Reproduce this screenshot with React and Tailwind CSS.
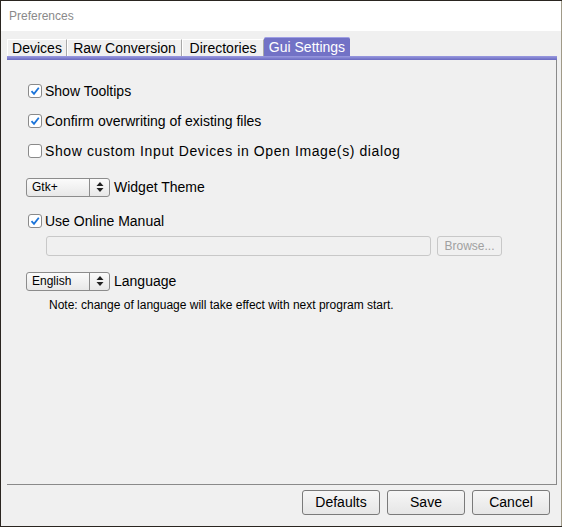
import React from "react";

const font = { fontFamily: '"Liberation Sans", Arial, sans-serif' };

function Check({ checked }) {
  return (
    <span className="w-[14px] h-[14px] border border-[#8a8a8a] rounded-[3px] bg-white flex items-center justify-center shrink-0">
      {checked && (
        <svg width="10" height="10" viewBox="0 0 10 10">
          <path d="M1.5 5.2 L4 7.8 L8.8 1.8" fill="none" stroke="#1a73d9" strokeWidth="1.8" />
        </svg>
      )}
    </span>
  );
}

function CheckRow({ checked, label, wide }) {
  return (
    <div className="flex items-center h-[18px] gap-[3px] text-[14px] text-black">
      <Check checked={checked} />
      <span className={wide ? "tracking-[0.6px]" : ""}>{label}</span>
    </div>
  );
}

function Combo({ value, label }) {
  return (
    <div className="flex items-center h-[20px] gap-[4px]">
      <div className="w-[84px] h-[19px] border border-[#8c8c8c] rounded-[3px] bg-gradient-to-b from-[#fbfbfb] to-[#e8e8e8] flex text-[12px]">
        <div className="flex-1 pl-[5px] flex items-center text-black">{value}</div>
        <div className="w-[20px] border-l border-[#8c8c8c] flex items-center justify-center">
          <svg width="8" height="12" viewBox="0 0 8 12">
            <path d="M0.5 5 L4 1 L7.5 5 Z" fill="#222" />
            <path d="M0.5 7 L4 11 L7.5 7 Z" fill="#222" />
          </svg>
        </div>
      </div>
      <span className="text-[14px] text-black">{label}</span>
    </div>
  );
}

function Btn({ children }) {
  return (
    <div className="w-[78px] h-[25px] border border-[#7a7a7a] rounded-[3px] bg-gradient-to-b from-[#f6f6f6] to-[#e6e6e6] flex items-center justify-center text-[14px] text-black">
      {children}
    </div>
  );
}

function Tab({ w, children }) {
  return (
    <div
      className={`${w} h-[17px] flex items-center justify-center border-l border-t border-white border-r-[#a8a8a8] border-r bg-[#f0f0f0] text-black`}
    >
      {children}
    </div>
  );
}

export default function App() {
  return (
    <div className="w-[562px] h-[527px] bg-[#2a2520] overflow-hidden" style={font}>
      <div className="ml-[1px] mt-[1px] w-[561px] h-[525px] bg-[#f0f0f0] border-r border-[#a09a88] flex flex-col">
        <div className="h-[30px] bg-white flex items-center pl-[8px] text-[12px] text-[#8a8a8a]">
          Preferences
        </div>
        <div className="flex-1 flex flex-col pl-[6px] pr-[4px] pt-[6px]">
          <div className="flex items-end h-[19px] text-[14px]">
            <Tab w="w-[60px]">Devices</Tab>
            <Tab w="w-[115px]">Raw Conversion</Tab>
            <Tab w="w-[82px]">Directories</Tab>
            <div className="w-[86px] h-[19px] flex items-center justify-center bg-[#7272c6] border-t border-[#a0a0e4] text-white rounded-t-[2px]">
              Gui Settings
            </div>
          </div>
          <div className="h-[4px] bg-gradient-to-b from-[#9a9ae0] to-[#6a6ac0]" />
          <div className="h-[425px] border-r border-b border-[#8a8a8a] bg-[#f0f0f0] pl-[21px] pt-[22px] flex flex-col">
            <div className="flex flex-col gap-[12px]">
              <CheckRow checked label="Show Tooltips" />
              <CheckRow checked label="Confirm overwriting of existing files" />
              <CheckRow wide label="Show custom Input Devices in Open Image(s) dialog" />
            </div>
            <div className="mt-[17px] -ml-[2px]">
              <Combo value="Gtk+" label="Widget Theme" />
            </div>
            <div className="mt-[15px]">
              <CheckRow checked label="Use Online Manual" />
            </div>
            <div className="mt-[6px] ml-[18px] flex gap-[6px]">
              <div className="w-[385px] h-[20px] border border-[#c8c8c8] rounded-[3px] bg-[#f0f0f0]" />
              <div className="w-[65px] h-[20px] border border-[#c8c8c8] rounded-[3px] bg-[#f0f0f0] flex items-center justify-center text-[12px] text-[#a0a0a0]">
                Browse...
              </div>
            </div>
            <div className="mt-[15px] -ml-[2px]">
              <Combo value="English" label="Language" />
            </div>
            <div className="mt-[5px] ml-[21px] text-[12px] text-black">
              Note: change of language will take effect with next program start.
            </div>
          </div>
          <div className="flex justify-end gap-[7px] pt-[5px] pr-[7px]">
            <Btn>Defaults</Btn>
            <Btn>Save</Btn>
            <Btn>Cancel</Btn>
          </div>
        </div>
      </div>
    </div>
  );
}
